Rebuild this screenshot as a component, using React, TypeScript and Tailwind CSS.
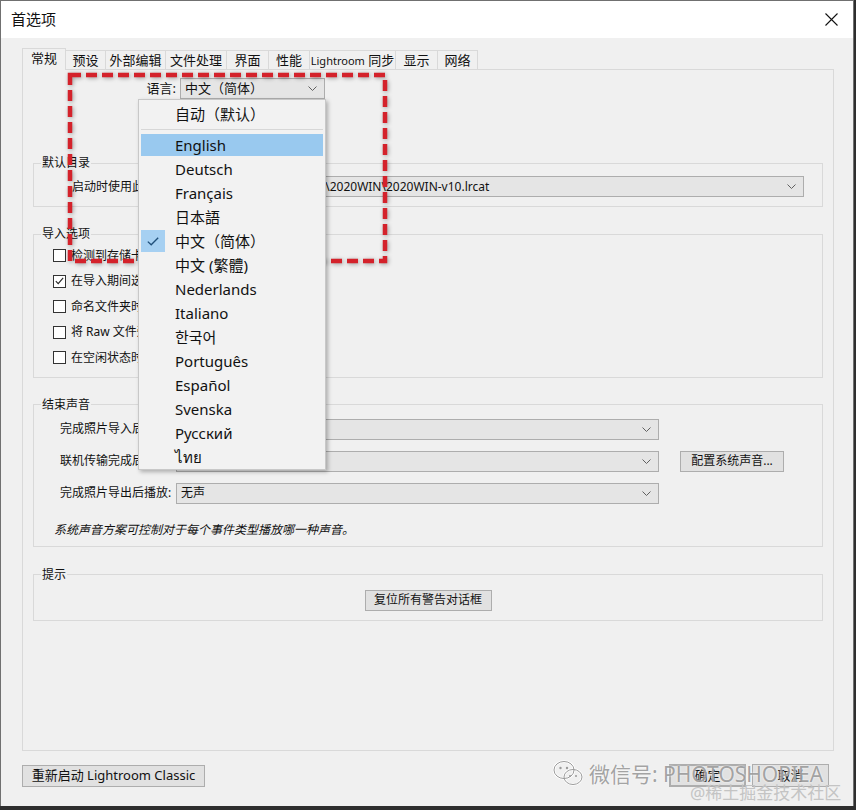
import type { ReactNode } from "react";

const TABS = [
  { label: "常规", cls: "w-[44px] h-[22px] z-10 bg-[#f0f0f0]" },
  { label: "预设", cls: "w-[40px] h-[20px]" },
  { label: "外部编辑", cls: "w-[60px] h-[20px]" },
  { label: "文件处理", cls: "w-[61px] h-[20px]" },
  { label: "界面", cls: "w-[42px] h-[20px]" },
  { label: "性能", cls: "w-[41px] h-[20px]" },
  { label: "Lightroom 同步", cls: "w-[86px] h-[20px]" },
  { label: "显示", cls: "w-[42px] h-[20px]" },
  { label: "网络", cls: "w-[40px] h-[20px]" },
];

const IMPORT_OPTIONS = [
  { label: "检测到存储卡时显示导入对话框", checked: false },
  { label: "在导入期间选择“当前/上次导入”收藏夹", checked: true },
  { label: "命名文件夹时忽略相机生成的文件夹名", checked: false },
  { label: "将 Raw 文件旁的 JPEG 视为单独照片", checked: false },
  { label: "在空闲状态时替换嵌入的预览", checked: false },
];

const LANGUAGES = [
  "English",
  "Deutsch",
  "Français",
  "日本語",
  "中文（简体）",
  "中文 (繁體)",
  "Nederlands",
  "Italiano",
  "한국어",
  "Português",
  "Español",
  "Svenska",
  "Русский",
  "ไทย",
];

function Chevron() {
  return (
    <svg width="9" height="5" viewBox="0 0 9 5" className="shrink-0" aria-hidden>
      <path d="M0.5 0.5 L4.5 4.5 L8.5 0.5" fill="none" stroke="#606060" strokeWidth="1" />
    </svg>
  );
}

function Select({ className, children }: { className?: string; children?: ReactNode }) {
  return (
    <div
      className={
        "flex h-[21px] items-center justify-between overflow-hidden border border-[#adadad] bg-[#e5e5e5] pl-[4px] pr-[7px] leading-none " +
        (className ?? "")
      }
    >
      <span className="whitespace-nowrap">{children}</span>
      <Chevron />
    </div>
  );
}

function Button({ className, children }: { className?: string; children: ReactNode }) {
  return (
    <div
      className={
        "flex items-center justify-center whitespace-nowrap border border-[#adadad] bg-[#e1e1e1] leading-none " +
        (className ?? "")
      }
    >
      {children}
    </div>
  );
}

function Group({ title, className, children }: { title: string; className?: string; children: ReactNode }) {
  return (
    <fieldset className={"border border-[#d9d9d9] " + (className ?? "")}>
      <legend className="ml-[7px] px-px text-[12px] leading-[16px]">{title}</legend>
      {children}
    </fieldset>
  );
}

function Checkbox({ checked }: { checked: boolean }) {
  return (
    <div className="flex size-[13px] shrink-0 items-center justify-center border border-[#333] bg-white">
      {checked && (
        <svg width="9" height="8" viewBox="0 0 9 8" aria-hidden>
          <path d="M0.8 4.2 L3.2 6.6 L8.2 0.8" fill="none" stroke="#222" strokeWidth="1.1" />
        </svg>
      )}
    </div>
  );
}

function LanguageMenu() {
  return (
    <div className="absolute left-[115px] top-[29px] z-20 flex h-[371px] w-[188px] flex-col border border-[#c8c8c8] bg-[#f2f2f2] pt-[2px] font-['Noto_Sans','Noto_Sans_CJK_SC','Noto_Sans_CJK_KR',sans-serif] text-[15px] text-[#111] shadow-[2px_2px_4px_rgba(0,0,0,0.28)]">
      <div className="flex h-[24px] items-center pl-[36px] leading-none">自动（默认）</div>
      <div className="flex h-[7px] items-center px-[2px]">
        <div className="h-px w-full bg-[#d7d7d7]" />
      </div>
      {LANGUAGES.map((lang) => {
        const hot = lang === "English";
        const checked = lang === "中文（简体）";
        return (
          <div key={lang} className="relative flex h-[24px] items-center px-[2px] py-px">
            <div
              className={
                "flex h-full w-full items-center pl-[34px] leading-none " + (hot ? "bg-[#99c9ef]" : "")
              }
            >
              {lang}
            </div>
            {checked && (
              <div className="absolute left-[2px] top-px flex h-[22px] w-[24px] items-center justify-center bg-[#a6d0f2]">
                <svg width="12" height="9" viewBox="0 0 12 9" aria-hidden>
                  <path d="M0.8 4.6 L4.2 7.8 L11.2 0.8" fill="none" stroke="#1f4f7a" strokeWidth="1.3" />
                </svg>
              </div>
            )}
          </div>
        );
      })}
    </div>
  );
}

function WeChatIcon() {
  return (
    <svg width="34" height="30" viewBox="0 0 34 30" aria-hidden>
      <g fill="none" stroke="#ffffff" strokeWidth="2.4">
        <ellipse cx="12" cy="11" rx="10" ry="8.5" />
        <ellipse cx="21" cy="18" rx="9" ry="7.5" />
      </g>
      <g fill="none" stroke="#9a9a9a" strokeWidth="1">
        <ellipse cx="12" cy="11" rx="10" ry="8.5" />
        <ellipse cx="21" cy="18" rx="9" ry="7.5" />
      </g>
      <circle cx="8.5" cy="9" r="1.2" fill="#9a9a9a" />
      <circle cx="15" cy="9" r="1.2" fill="#9a9a9a" />
      <circle cx="18" cy="17" r="1" fill="#9a9a9a" />
      <circle cx="24" cy="17" r="1" fill="#9a9a9a" />
    </svg>
  );
}

export default function App() {
  return (
    <div className="relative h-[810px] w-[856px] overflow-hidden bg-[#2e2e2e] font-['Noto_Sans','Noto_Sans_CJK_SC',sans-serif] text-[#111]">
      <div className="flex h-[806px] w-[854px] flex-col border-l border-r border-t border-[#707070] bg-[#f0f0f0]">
        {/* title bar */}
        <div className="flex h-[37px] shrink-0 items-center justify-between bg-white pl-[10px] pr-[15px]">
          <span className="text-[15px] leading-none">首选项</span>
          <svg width="13" height="13" viewBox="0 0 13 13" aria-hidden>
            <path d="M0.5 0.5 L12.5 12.5 M12.5 0.5 L0.5 12.5" stroke="#111" strokeWidth="1.1" />
          </svg>
        </div>

        <div className="flex flex-1 flex-col pl-[21px] pt-[10px]">
          {/* tabs */}
          <div className="relative z-10 flex h-[22px] items-end">
            {TABS.map((t, i) => (
              <div
                key={t.label}
                className={
                  "flex items-center justify-center whitespace-nowrap border-r border-t border-[#d9d9d9] text-[13px] leading-none " +
                  (i === 0 ? "border-l pb-[2px] " : "") +
                  t.cls
                }
              >
                {t.label === "Lightroom 同步" ? (
                  <span>
                    <span className="text-[11px]">Lightroom</span> 同步
                  </span>
                ) : (
                  t.label
                )}
              </div>
            ))}
          </div>

          {/* tab page */}
          <div className="relative -mt-px flex h-[682px] w-[812px] flex-col border border-[#d9d9d9] bg-[#f0f0f0] px-[10px] text-[12px]">
            <div className="mt-[8px] flex h-[21px] items-center">
              <span className="ml-[103px] w-[40px] text-right text-[13px] leading-none">语言:</span>
              <Select className="ml-[4px] w-[145px] text-[13px]">中文（简体）</Select>
            </div>

            <Group title="默认目录" className="mt-[56px] pb-[9px]">
              <div className="mt-[5px] flex h-[21px] items-center pl-[38px] pr-[18px]">
                <span className="leading-none">启动时使用此目录:</span>
                <Select className="ml-[4px] flex-1">
                  <span className="inline-block w-[145px] overflow-hidden align-bottom">E:\Lightroom\Catalogs</span>
                  \2020WIN\2020WIN-v10.lrcat
                </Select>
              </div>
            </Group>

            <Group title="导入选项" className="mt-[19px] pb-[6px]">
              <div className="mt-px flex flex-col pl-[19px]">
                {IMPORT_OPTIONS.map((o) => (
                  <div key={o.label} className="flex h-[25.5px] items-center gap-[5px]">
                    <Checkbox checked={o.checked} />
                    <span className="leading-none">{o.label}</span>
                  </div>
                ))}
              </div>
            </Group>

            <Group title="结束声音" className="mt-[19px] pb-[8px]">
              <div className="mt-[6px] flex flex-col gap-[11px] pl-[26px]">
                <div className="flex h-[21px] items-center">
                  <span className="w-[116px] leading-none">完成照片导入后播放:</span>
                  <Select className="w-[483px]">无声</Select>
                </div>
                <div className="flex h-[21px] items-center">
                  <span className="w-[116px] leading-none">联机传输完成后播放:</span>
                  <Select className="w-[483px]">无声</Select>
                  <Button className="ml-[21px] h-[21px] w-[104px]">配置系统声音...</Button>
                </div>
                <div className="flex h-[21px] items-center">
                  <span className="w-[116px] leading-none">完成照片导出后播放:</span>
                  <Select className="w-[483px]">无声</Select>
                </div>
              </div>
              <p className="mt-[18px] pl-[20px] text-[12px] italic leading-[16px]">
                系统声音方案可控制对于每个事件类型播放哪一种声音。
              </p>
            </Group>

            <Group title="提示" className="mt-[20px] pb-[9px]">
              <div className="mt-[7px] flex justify-center">
                <Button className="h-[21px] w-[127px] text-[12px]">复位所有警告对话框</Button>
              </div>
            </Group>

            <LanguageMenu />
          </div>

          {/* bottom buttons */}
          <div className="mt-[13px] flex w-[812px] items-center pr-[5px]">
            <Button className="h-[22px] w-[183px] text-[13px]">重新启动 Lightroom Classic</Button>
            <Button className="ml-auto h-[23px] w-[77px] border-2 border-[#0078d7] text-[13px]">确定</Button>
            <Button className="ml-[6px] h-[23px] w-[77px] text-[13px]">取消</Button>
          </div>
        </div>
      </div>

      {/* red annotation box */}
      <svg
        className="pointer-events-none absolute left-[64px] top-[69px] drop-shadow-[1px_1px_2px_rgba(0,0,0,0.35)]"
        width="327"
        height="198"
        viewBox="0 0 327 198"
        aria-hidden
      >
        <rect x="6" y="6" width="315" height="186" fill="none" stroke="#d4222b" strokeWidth="4.5" strokeDasharray="11 5" />
      </svg>

      {/* watermark */}
      <div className="pointer-events-none absolute left-[552px] top-[759px] flex items-center gap-[3px]">
        <WeChatIcon />
        <span className="text-[21px] leading-none text-[#8c8c8c]/80 [text-shadow:0_0_2px_#fff]">微信号: PHOTOSHOPIEA</span>
      </div>
      <span className="pointer-events-none absolute left-[690px] top-[784px] text-[17px] leading-none text-[#c4c4c4]">
        @稀土掘金技术社区
      </span>
    </div>
  );
}
